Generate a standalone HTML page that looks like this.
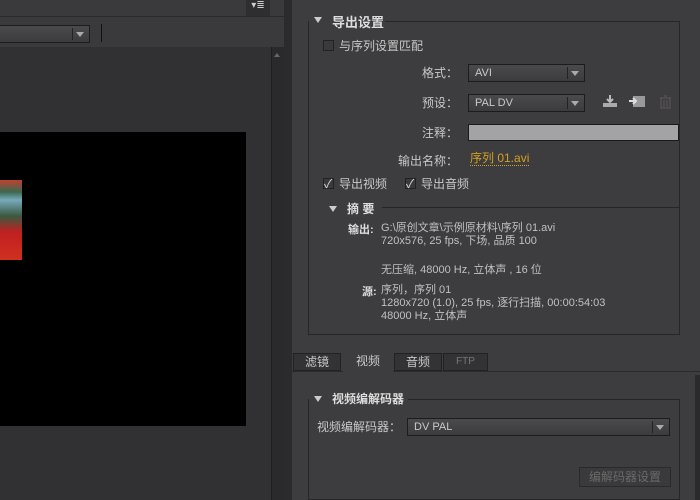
<!DOCTYPE html><html><head><meta charset="utf-8"><style>
*{margin:0;padding:0;box-sizing:border-box}
body{width:700px;height:500px;overflow:hidden;background:#3b3a3c;font-family:"Liberation Sans","Noto Sans CJK SC",sans-serif;font-size:12px;color:#c8c8c8;position:relative}
.a{position:absolute}
.dd{position:absolute;border:1px solid #1c1c1c;background:linear-gradient(#4a494b,#3c3b3d);color:#c8c8c8;padding:2px 6px;font-size:11px;height:18px}
.dd:after{content:"";position:absolute;right:5px;top:6px;border:4px solid transparent;border-top:5px solid #aaa}
.dd i{position:absolute;right:16px;top:2px;bottom:2px;border-left:1px solid #222}
.cb{position:absolute;width:11px;height:11px;border:1px solid #222;background:#3a393b}
.ck:after{content:"✓";position:absolute;left:0px;top:-4px;font-size:12px;color:#ddd}
.tri{position:absolute;border:4px solid transparent;border-top:6px solid #ccc}
.lbl{position:absolute;text-align:right;font-size:12px}
.s{position:absolute;font-size:11px;color:#c0c0c0;line-height:13px}
</style></head><body>
<div class="a" style="left:0;top:0;width:285px;height:17px;background:#3a393b;border-bottom:1px solid #2a2a2a"></div>
<div class="a" style="left:246px;top:0;width:24px;height:16px;background:#2e2d2f;color:#ccc;font-size:10px;text-align:center">▾≣</div>
<div class="a" style="left:0;top:17px;width:285px;height:30px;background:#3a393b"></div>
<div class="dd" style="left:-2px;top:25px;width:92px"><i></i></div>
<div class="a" style="left:101px;top:24px;width:1px;height:18px;background:#111"></div>
<div class="a" style="left:0;top:47px;width:271px;height:453px;background:#313032"></div>
<div class="a" style="left:271px;top:47px;width:13px;height:453px;background:#2a292b;border-left:1px solid #1e1e1e"></div>
<div class="a" style="left:274px;top:50px;border:3px solid transparent;border-bottom:4px solid #666"></div>
<div class="a" style="left:0;top:132px;width:246px;height:294px;background:#000"></div>
<div class="a" style="left:0;top:180px;width:22px;height:80px;background:linear-gradient(#c04030 0,#3a6a50 15%,#7ab 25%,#3a5a40 45%,#c02020 65%,#d03020 100%)"></div>
<div class="a" style="left:284px;top:0;width:8px;height:500px;background:#2b2a2c"></div>
<div class="a" style="left:292px;top:0;width:408px;height:500px;background:#3d3c3e"></div>
<div class="a" style="left:308px;top:21px;width:372px;height:314px;border:1px solid #262626;border-top:none"></div>
<div class="a" style="left:385px;top:21px;width:295px;height:1px;background:#262626"></div>
<div class="tri" style="left:314px;top:17px"></div>
<div class="a" style="left:332px;top:12px;font-weight:bold;font-size:13px;color:#ddd">导出设置</div>
<div class="cb" style="left:323px;top:40px"></div>
<div class="a" style="left:339px;top:37px">与序列设置匹配</div>
<div class="lbl" style="left:400px;top:64px;width:58px">格式：</div>
<div class="dd" style="left:468px;top:64px;width:117px">AVI<i></i></div>
<div class="lbl" style="left:400px;top:94px;width:58px">预设：</div>
<div class="dd" style="left:468px;top:94px;width:117px">PAL DV<i></i></div>
<svg class="a" style="left:602px;top:94px" width="16" height="14"><path d="M8 1v7M5 5l3 3 3-3" stroke="#bbb" stroke-width="2" fill="none"/><rect x="1" y="9" width="14" height="4" fill="#aaa"/></svg>
<svg class="a" style="left:628px;top:95px" width="18" height="13"><rect x="5" y="1" width="12" height="11" fill="#999"/><path d="M1 6h6M5 3l3 3-3 3" stroke="#ddd" stroke-width="2" fill="none"/></svg>
<svg class="a" style="left:659px;top:95px" width="13" height="14"><path d="M1 3h11M5 1h3M2 3v10h9V3M5 5v7M8 5v7" stroke="#5a595b" fill="none"/></svg>
<div class="lbl" style="left:400px;top:124px;width:58px">注释：</div>
<div class="a" style="left:468px;top:124px;width:211px;height:17px;background:#a3a2a4;border:1px solid #1a1a1a"></div>
<div class="lbl" style="left:380px;top:152px;width:78px">输出名称：</div>
<div class="a" style="left:470px;top:152px;color:#d4a020;border-bottom:1px dotted #d4a020;font-size:12px;line-height:13px">序列 01.avi</div>
<div class="cb ck" style="left:323px;top:178px"></div>
<div class="a" style="left:339px;top:175px">导出视频</div>
<div class="cb ck" style="left:405px;top:178px"></div>
<div class="a" style="left:421px;top:175px">导出音频</div>
<div class="tri" style="left:329px;top:206px"></div>
<div class="a" style="left:347px;top:200px;font-weight:bold;color:#ddd">摘 要</div>
<div class="a" style="left:382px;top:207px;width:297px;height:1px;background:#262626"></div>
<div class="a" style="left:348px;top:221px;font-weight:bold;color:#ddd;font-size:11px">输出:</div>
<div class="s" style="left:381px;top:222px">G:\原创文章\示例原材料\序列 01.avi<br>720x576, 25 fps, 下场, 品质 100</div>
<div class="s" style="left:381px;top:264px">无压缩, 48000 Hz, 立体声 , 16 位</div>
<div class="a" style="left:362px;top:283px;font-weight:bold;color:#ddd;font-size:11px">源:</div>
<div class="s" style="left:381px;top:284px">序列，序列 01<br>1280x720 (1.0), 25 fps, 逐行扫描, 00:00:54:03<br>48000 Hz, 立体声</div>
<div class="a" style="left:292px;top:371px;width:408px;height:1px;background:#2a2a2a"></div>
<div class="a" style="left:293px;top:353px;width:48px;height:18px;background:#333234;border:1px solid #222;text-align:center;line-height:16px">滤镜</div>
<div class="a" style="left:343px;top:351px;width:50px;height:21px;background:#3d3c3e;text-align:center;line-height:20px">视频</div>
<div class="a" style="left:394px;top:353px;width:48px;height:18px;background:#333234;border:1px solid #222;text-align:center;line-height:16px">音频</div>
<div class="a" style="left:443px;top:353px;width:45px;height:18px;background:#333234;border:1px solid #222;text-align:center;line-height:16px;color:#777;font-size:10px">FTP</div>
<div class="a" style="left:308px;top:399px;width:372px;height:101px;border:1px solid #262626;border-top:none"></div>
<div class="a" style="left:408px;top:399px;width:272px;height:1px;background:#262626"></div>
<div class="tri" style="left:314px;top:396px"></div>
<div class="a" style="left:332px;top:390px;font-weight:bold;color:#ddd">视频编解码器</div>
<div class="a" style="left:317px;top:418px">视频编解码器：</div>
<div class="dd" style="left:407px;top:418px;width:263px">DV PAL<i></i></div>
<div class="a" style="left:579px;top:467px;width:92px;height:20px;border:1px solid #2a2a2a;background:#3a393b;color:#6a6a6a;text-align:center;line-height:18px">编解码器设置</div>
<div class="a" style="left:695px;top:375px;width:5px;height:125px;background:#2a292b"></div>
</body></html>
